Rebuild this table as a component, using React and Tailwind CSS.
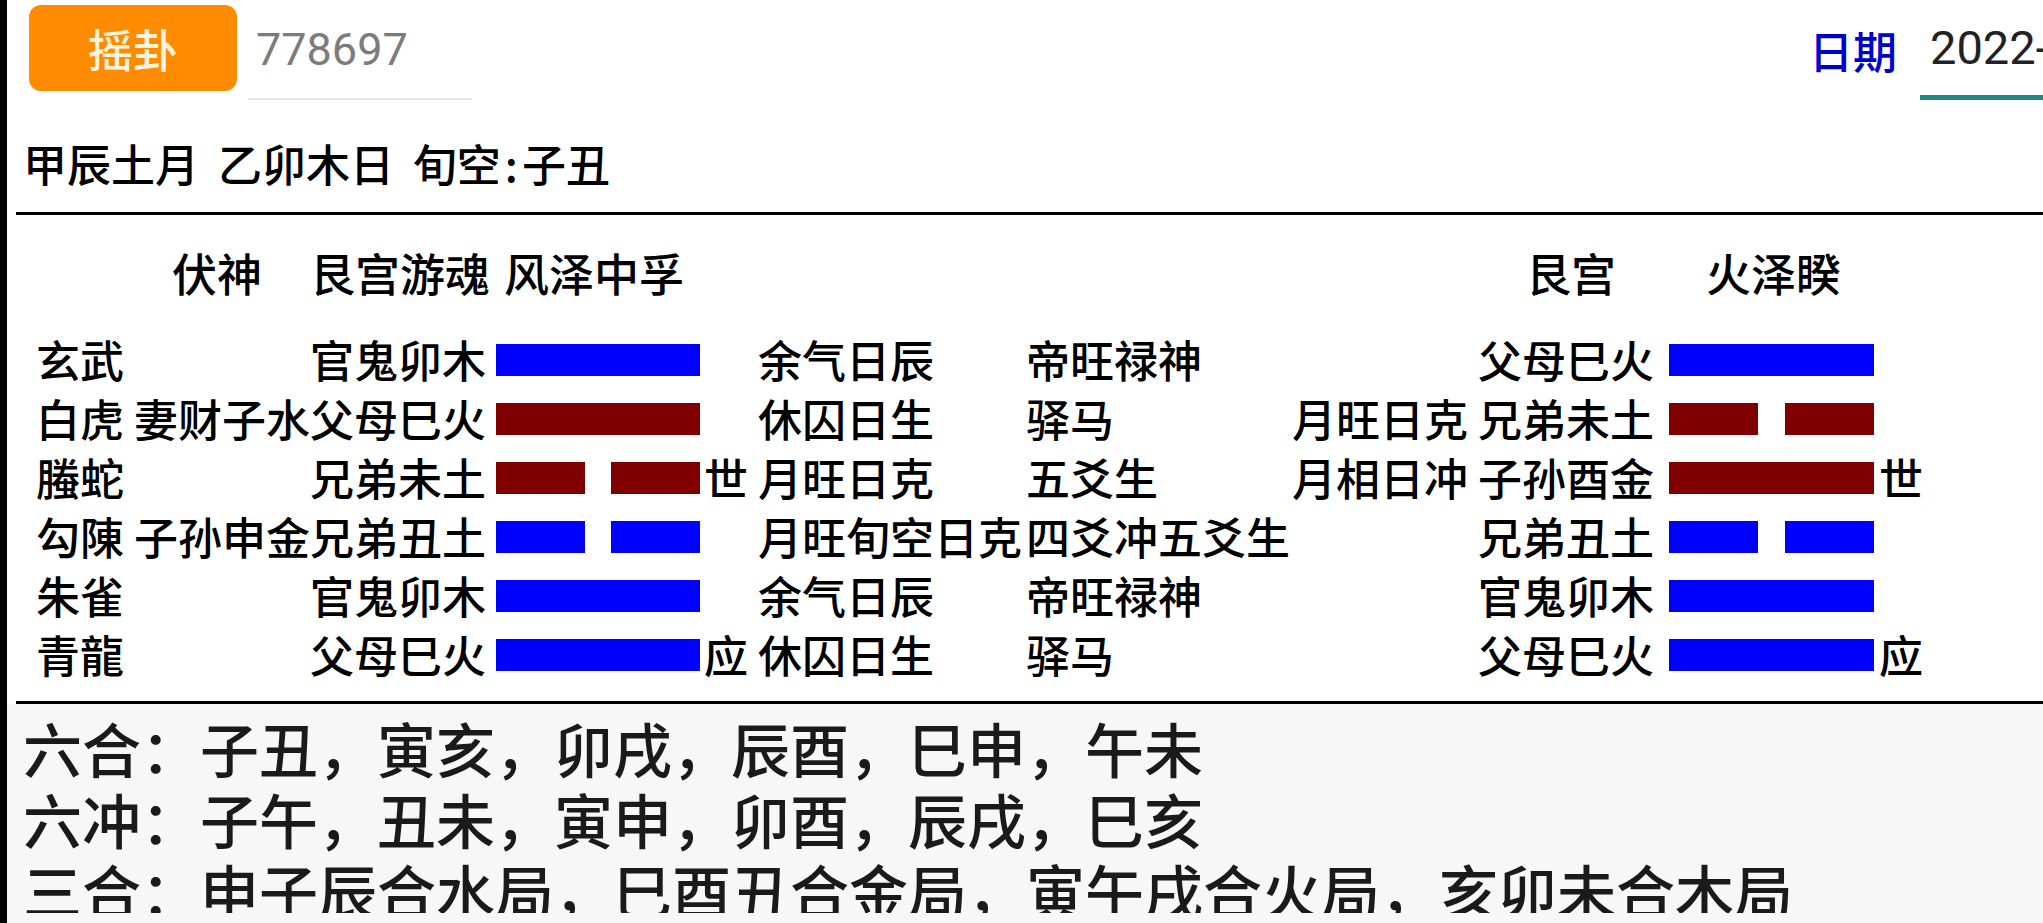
import React from 'react'

const BLUE = 'bg-[#0000ff]'
const RED = 'bg-[#800000]'

const leftRows = [
  { god: '玄武', hidden: '', rel: '官鬼卯木', yang: true, color: BLUE, mark: '', state: '余气日辰', note: '帝旺禄神' },
  { god: '白虎', hidden: '妻财子水', rel: '父母巳火', yang: true, color: RED, mark: '', state: '休囚日生', note: '驿马' },
  { god: '螣蛇', hidden: '', rel: '兄弟未土', yang: false, color: RED, mark: '世', state: '月旺日克', note: '五爻生' },
  { god: '勾陳', hidden: '子孙申金', rel: '兄弟丑土', yang: false, color: BLUE, mark: '', state: '月旺旬空日克', note: '四爻冲五爻生' },
  { god: '朱雀', hidden: '', rel: '官鬼卯木', yang: true, color: BLUE, mark: '', state: '余气日辰', note: '帝旺禄神' },
  { god: '青龍', hidden: '', rel: '父母巳火', yang: true, color: BLUE, mark: '应', state: '休囚日生', note: '驿马' },
]

const rightRows = [
  { label: '', rel: '父母巳火', yang: true, color: BLUE, mark: '' },
  { label: '月旺日克', rel: '兄弟未土', yang: false, color: RED, mark: '' },
  { label: '月相日冲', rel: '子孙酉金', yang: true, color: RED, mark: '世' },
  { label: '', rel: '兄弟丑土', yang: false, color: BLUE, mark: '' },
  { label: '', rel: '官鬼卯木', yang: true, color: BLUE, mark: '' },
  { label: '', rel: '父母巳火', yang: true, color: BLUE, mark: '应' },
]

const summary = [
  '六合：子丑，寅亥，卯戌，辰酉，巳申，午未',
  '六冲：子午，丑未，寅申，卯酉，辰戌，巳亥',
  '三合：申子辰合水局，巳酉丑合金局，寅午戌合火局，亥卯未合木局',
]

function Yao({ yang, color, width }) {
  if (yang) return <div className={`h-[32px] ${width} ${color}`} />
  return (
    <div className={`flex h-[32px] ${width} justify-between`}>
      <div className={`h-full w-[89px] ${color}`} />
      <div className={`h-full w-[89px] ${color}`} />
    </div>
  )
}

export default function App() {
  return (
    <div className="flex h-[923px] w-[2043px] overflow-hidden bg-white font-['Noto_Sans_CJK_SC',sans-serif] font-medium text-black">
      <div className="w-[7px] shrink-0 bg-black" />

      <div className="flex min-w-0 flex-1 flex-col">
        {/* top bar */}
        <div className="flex h-[105px] shrink-0 items-start">
          <button className="ml-[22px] mt-[5px] flex h-[86px] w-[208px] items-center justify-center rounded-[12px] bg-[#ff8b00] text-[45px] leading-none text-[#fff4dc]">
            摇卦
          </button>
          <div className="ml-[11px] flex h-[100px] w-[224px] items-center border-b-2 border-[#e6e6e6] pl-[8px] font-['Roboto',sans-serif] text-[45px] font-normal leading-none text-[#7c7c7c]">
            778697
          </div>
          <div className="ml-auto flex items-center">
            <span className="text-[44px] leading-[96px] text-[#0000cc]">日期</span>
            <div className="ml-[23px] flex h-[100px] w-[123px] items-center whitespace-nowrap border-b-[5px] border-[#1b8b7d] pl-[10px] font-['Roboto',sans-serif] text-[47px] font-normal leading-none text-[#222]">
              2022-05-02
            </div>
          </div>
        </div>

        {/* ganzhi */}
        <div className="ml-[16px] flex h-[107px] shrink-0 items-center whitespace-pre pt-[9px] text-[44px] leading-[60px] [word-spacing:9px]">
          甲辰土月 乙卯木日 旬空<span className="mx-[4px]">:</span>子丑
        </div>
        <div className="ml-[9px] h-[3px] shrink-0 bg-black" />

        {/* hexagram headers */}
        <div className="flex h-[115px] shrink-0 items-start pl-[29px] pt-[30px] text-[45px] leading-[55px]">
          <div className="flex w-[1256px]">
            <div className="w-[98px]" />
            <div className="w-[176px] pl-[38px]">伏神</div>
            <span>艮宫游魂</span>
            <span className="ml-[14px]">风泽中孚</span>
          </div>
          <div className="flex pl-[234px]">
            <span>艮宫</span>
            <span className="ml-[90px]">火泽睽</span>
          </div>
        </div>

        {/* lines */}
        <div className="flex shrink-0 flex-col pl-[29px] text-[44px] leading-[59px]">
          {leftRows.map((r, i) => {
            const rr = rightRows[i]
            return (
              <div key={i} className="flex h-[59px] items-center whitespace-nowrap">
                <div className="flex w-[1256px] items-center">
                  <div className="w-[98px]">{r.god}</div>
                  <div className="w-[176px] text-right">{r.hidden}</div>
                  <div className="w-[178px]">{r.rel}</div>
                  <div className="ml-[8px]">
                    <Yao yang={r.yang} color={r.color} width="w-[204px]" />
                  </div>
                  <div className="w-[58px] pl-[4px]">{r.mark}</div>
                  <div className="w-[268px]">{r.state}</div>
                  <div className="w-[266px]">{r.note}</div>
                </div>
                <div className="flex items-center">
                  <div className="w-[176px]">{rr.label}</div>
                  <div className="ml-[10px] w-[176px]">{rr.rel}</div>
                  <div className="ml-[15px]">
                    <Yao yang={rr.yang} color={rr.color} width="w-[205px]" />
                  </div>
                  <div className="pl-[5px]">{rr.mark}</div>
                </div>
              </div>
            )
          })}
        </div>

        <div className="ml-[9px] mt-[17px] h-[3px] shrink-0 bg-black" />

        {/* summary */}
        <div className="flex-1 bg-[#f7f7f7]">
          <div className="h-[209px] overflow-hidden pl-[16px] pt-[8px] text-[59px] leading-[71px] text-[#1a1a1a]">
            {summary.map((s) => (
              <div key={s} className="whitespace-nowrap">{s}</div>
            ))}
          </div>
        </div>
      </div>
    </div>
  )
}
